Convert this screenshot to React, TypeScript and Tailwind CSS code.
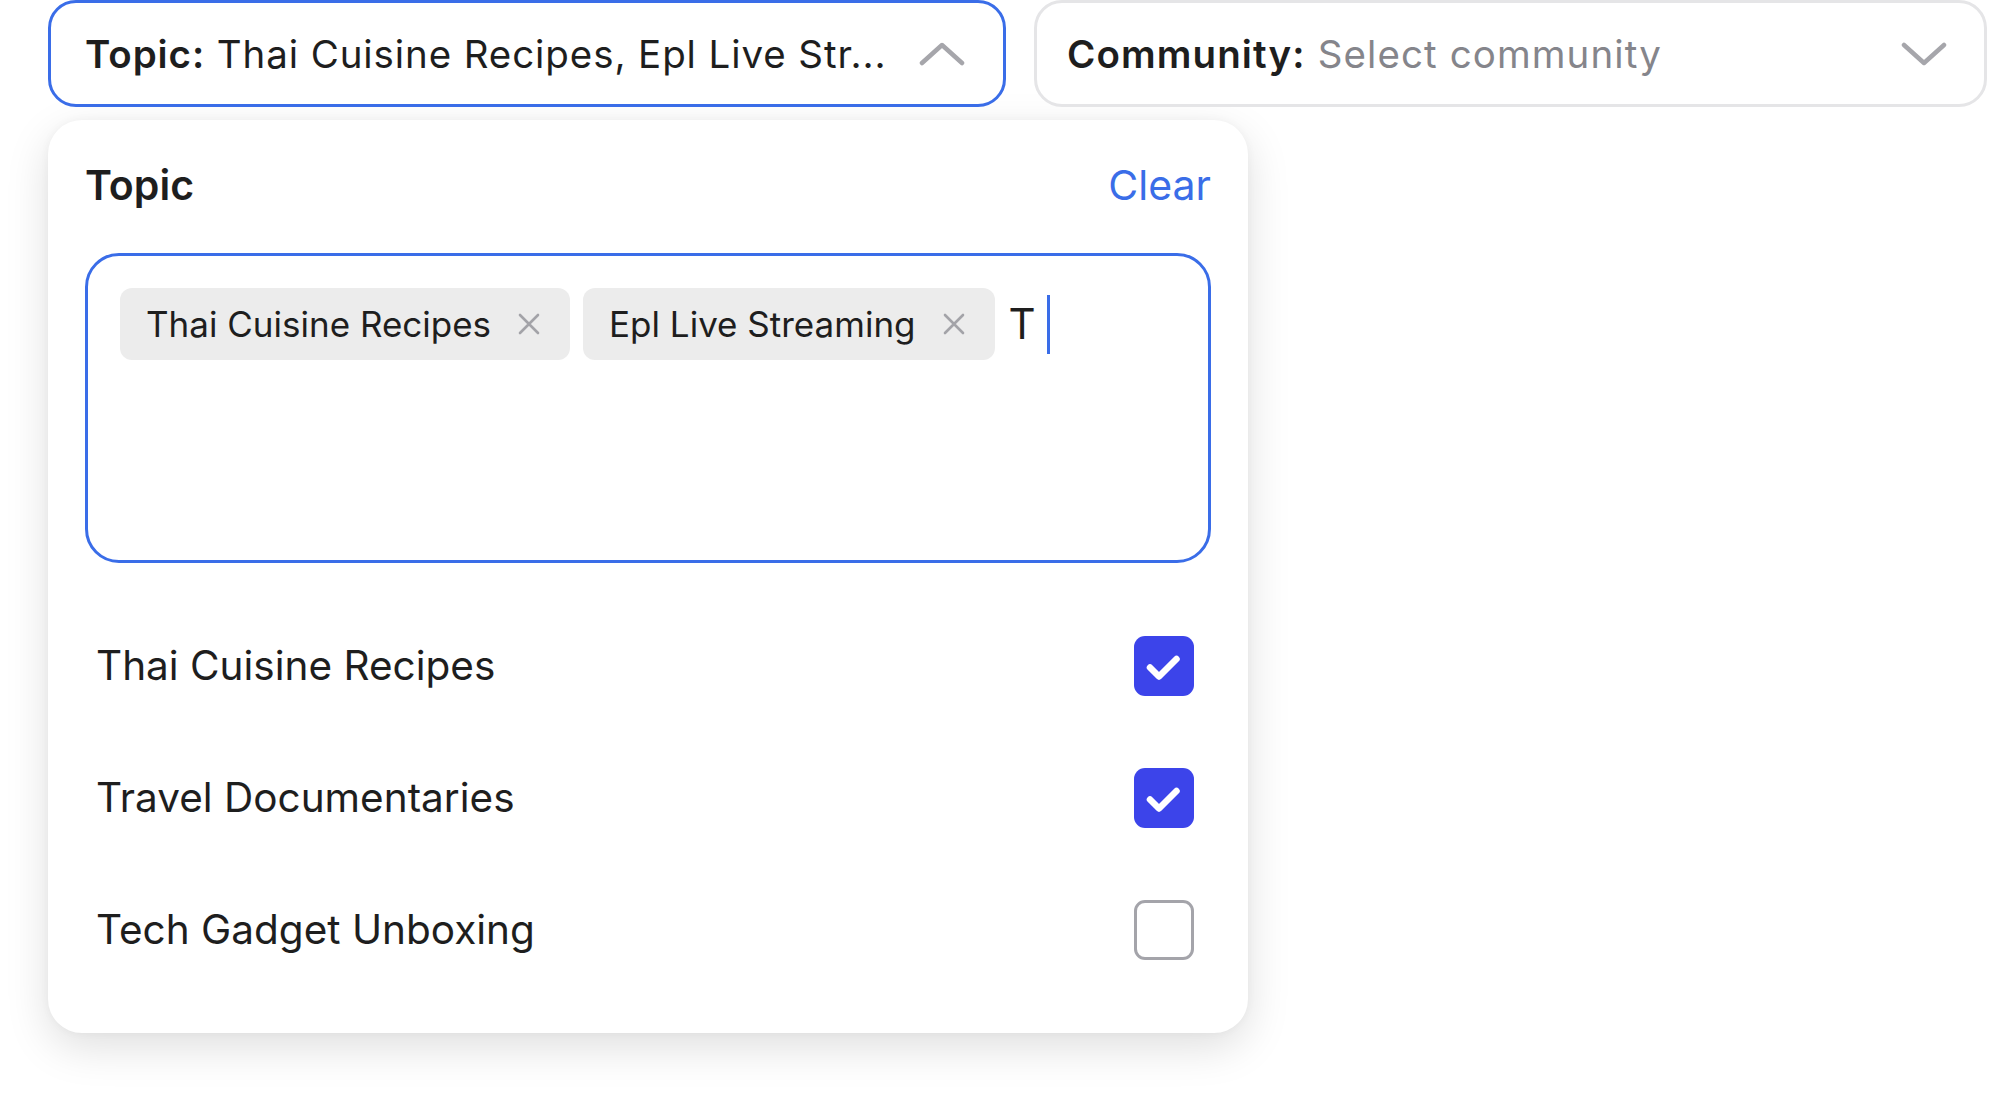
import React from "react";

function ChevronUp({ className }: { className?: string }) {
  return (
    <svg width="46" height="24" viewBox="0 0 46 24" fill="none" className={className}>
      <polyline points="3,21 23,3 43,21" stroke="#a6a6ab" strokeWidth="4.5" strokeLinecap="round" strokeLinejoin="round" />
    </svg>
  );
}

function ChevronDown({ className }: { className?: string }) {
  return (
    <svg width="46" height="24" viewBox="0 0 46 24" fill="none" className={className}>
      <polyline points="3,3 23,21 43,3" stroke="#a6a6ab" strokeWidth="4.5" strokeLinecap="round" strokeLinejoin="round" />
    </svg>
  );
}

function XIcon() {
  return (
    <svg width="24" height="24" viewBox="0 0 24 24" fill="none">
      <path d="M3 3 L21 21 M21 3 L3 21" stroke="#a3a3a8" strokeWidth="2.6" strokeLinecap="round" />
    </svg>
  );
}

function Chip({ label }: { label: string }) {
  return (
    <div className="h-[72px] flex items-center gap-[26px] pl-[26px] pr-[29px] rounded-[12px] bg-[#ececec] text-[35px] text-[#1e1e1e] leading-[1.2] whitespace-nowrap">
      <span>{label}</span>
      <XIcon />
    </div>
  );
}

function Checkbox({ checked }: { checked: boolean }) {
  if (checked) {
    return (
      <div className="w-[60px] h-[60px] rounded-[11px] bg-[#3c44ea] flex items-center justify-center">
        <svg width="60" height="60" viewBox="0 0 60 60" fill="none">
          <path d="M16 31.5 L25 40.5 L42.5 23" stroke="#ffffff" strokeWidth="6.5" strokeLinecap="round" strokeLinejoin="round" />
        </svg>
      </div>
    );
  }
  return <div className="w-[60px] h-[60px] rounded-[11px] border-[3px] border-[#a4a4aa] bg-white" />;
}

const items = [
  { label: "Thai Cuisine Recipes", checked: true },
  { label: "Travel Documentaries", checked: true },
  { label: "Tech Gadget Unboxing", checked: false },
];

export default function App() {
  return (
    <div className="w-[1992px] h-[1098px] bg-white overflow-hidden font-['Inter',_sans-serif] text-[#1e1e1e]">
      <div className="flex gap-[28px] pl-[48px] pr-[5px]">
        <button className="flex-1 min-w-0 h-[107px] border-[3px] border-[#3a6de8] rounded-[28px] flex items-center pl-[34px] pr-[38px] pt-[2px] bg-white">
          <span className="flex-1 min-w-0 text-left text-[38.5px] tracking-[0.9px] leading-[1.2] whitespace-nowrap">
            <span className="font-semibold">Topic:</span> Thai Cuisine Recipes, Epl Live Str...
          </span>
          <ChevronUp className="shrink-0 -mt-[2px]" />
        </button>
        <button className="flex-1 min-w-0 h-[107px] border-[3px] border-[#e5e5e7] rounded-[28px] flex items-center pl-[30px] pr-[37px] pt-[2px] bg-white">
          <span className="flex-1 min-w-0 text-left text-[38.5px] tracking-[1.1px] leading-[1.2] whitespace-nowrap">
            <span className="font-semibold">Community:</span> <span className="text-[#85858b]">Select community</span>
          </span>
          <ChevronDown className="shrink-0 -mt-[2px]" />
        </button>
      </div>

      <div className="mt-[13px] ml-[48px] w-[1200px] rounded-[34px] bg-white p-[37px] shadow-[0_14px_44px_rgba(0,0,0,0.13),0_0_10px_rgba(0,0,0,0.04)]">
        <div className="h-[56px] flex items-center justify-between text-[41px] leading-[56px]">
          <span className="font-semibold">Topic</span>
          <span className="text-[#3a6de8]">Clear</span>
        </div>

        <div className="mt-[40px] h-[310px] border-[3px] border-[#3a6de8] rounded-[34px] p-[32px] flex flex-wrap content-start items-start gap-[13px]">
          <Chip label="Thai Cuisine Recipes" />
          <Chip label="Epl Live Streaming" />
          <div className="h-[72px] flex items-center pl-[1px]">
            <span className="text-[42px] leading-[1.2]">T</span>
            <span className="ml-[11px] w-[3px] h-[59px] bg-[#3a6de8]" />
          </div>
        </div>

        <div className="mt-[37px] flex flex-col">
          {items.map((it) => (
            <div key={it.label} className="h-[132px] flex items-center justify-between pl-[11px] pr-[17px]">
              <span className="text-[40.5px] leading-[1.2]">{it.label}</span>
              <Checkbox checked={it.checked} />
            </div>
          ))}
        </div>
      </div>
    </div>
  );
}
